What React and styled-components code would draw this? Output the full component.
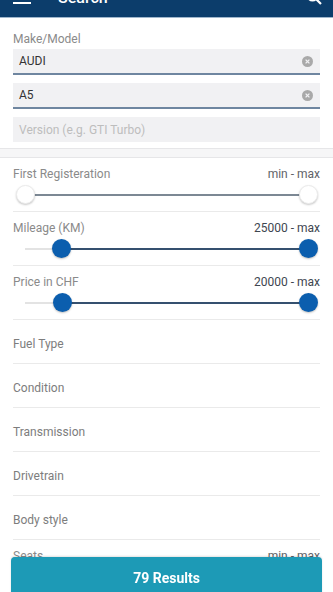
import React from "react";
import styled, {createGlobalStyle} from "styled-components";

const GlobalStyle = createGlobalStyle`
  html, body {
    margin: 0;
    padding: 0;
    background: #ffffff;
    overflow: hidden;
  }
  body {
    font-family: Roboto, "Liberation Sans", sans-serif;
    -webkit-font-smoothing: antialiased;
  }
`

const HeaderClip = styled.header`
  height: 17px;
  overflow: hidden;
  background: #0c3d6b;
  border-bottom: 1px solid #9fb6cc;
`

const Toolbar = styled.div`
  height: 40px;
  margin-top: -23px;
  display: flex;
  align-items: center;
  padding: 0 11px 0 13px;
  color: #ffffff;
`

const Title = styled.div`
  flex: 1;
  margin-left: 27px;
  font-size: 16px;
  font-weight: 500;
  line-height: 19px;
`

const Form = styled.div`
  padding: 13px 13px 6px 13px;
  display: flex;
  flex-direction: column;
`

const FieldLabel = styled.div`
  font-size: 12px;
  line-height: 16px;
  color: #8a8a8a;
  margin-bottom: 2px;
`

const InputBox = styled.div`
  height: ${p => (p.underline ? 24 : 25)}px;
  margin-top: ${p => (p.first ? 0 : 8)}px;
  background: #f1f1f3;
  border-bottom: ${p => (p.underline ? "2px solid #6f86a0" : "none")};
  display: flex;
  align-items: center;
  padding: 0 7px 0 6px;
  font-size: 12px;
  color: ${p => (p.placeholder ? "#bdbdbd" : "#333333")};
`

const InputText = styled.span`
  flex: 1;
`

const ClearIcon = () => (
    <svg width="11" height="11" viewBox="0 0 11 11">
        <circle cx="5.5" cy="5.5" r="5.5" fill="#a9a9a9"/>
        <path d="M3.6 3.6 L7.4 7.4 M7.4 3.6 L3.6 7.4" stroke="#f1f1f3" strokeWidth="1.3"/>
    </svg>
)

const SectionBand = styled.div`
  height: 8px;
  background: #f6f6f7;
  border-top: 1px solid #e6e6e8;
  border-bottom: 1px solid #e6e6e8;
`

const List = styled.div`
  padding: 0 13px;
`

const SliderBlock = styled.div`
  height: 54px;
  padding-top: 8px;
  box-sizing: border-box;
  border-bottom: 1px solid #eaeaea;
`

const RowHead = styled.div`
  display: flex;
  justify-content: space-between;
  font-size: 12px;
  line-height: 16px;
  color: #8a8a8a;
`

const RangeValue = styled.span`
  color: ${p => (p.set ? "#3e4650" : "#5f6368")};
`

const Track = styled.div`
  position: relative;
  height: 20px;
  margin: 3px 12px 0 12px;
`

const Rail = styled.div`
  position: absolute;
  left: 0;
  right: 0;
  top: 9px;
  height: 2px;
  background: #e3e3e3;
`

const ActiveRail = styled.div`
  position: absolute;
  top: 9px;
  height: 2px;
  background: ${p => (p.active ? "#35506f" : "#7c8894")};
`

const Thumb = styled.div`
  position: absolute;
  top: 0;
  width: 19px;
  height: 19px;
  margin-left: -9.5px;
  border-radius: 50%;
  box-sizing: border-box;
  background: ${p => (p.active ? "#0b5eae" : "#ffffff")};
  border: ${p => (p.active ? "none" : "1px solid #ececec")};
  box-shadow: ${p => (p.active ? "0 1px 2px rgba(0,0,0,0.25)" : "0 1px 2px rgba(0,0,0,0.22)")};
`

const ListItem = styled.div`
  height: 44px;
  box-sizing: border-box;
  padding-top: 16px;
  font-size: 12px;
  line-height: 16px;
  color: #7d7d7d;
  border-bottom: 1px solid #eaeaea;
`

const ResultsButton = styled.button`
  position: fixed;
  left: 11px;
  right: 11px;
  top: 557px;
  height: 42px;
  border: none;
  border-radius: 4px 4px 0 0;
  background: #1d9ab6;
  color: #ffffff;
  font-family: Roboto, "Liberation Sans", sans-serif;
  font-size: 14px;
  font-weight: 700;
  box-shadow: 0 -1px 2px rgba(0,0,0,0.12);
`

const RangeSlider = ({label, value, from, to, active}) => (
    <SliderBlock>
        <RowHead>
            <span>{label}</span>
            <RangeValue set={active}>{value}</RangeValue>
        </RowHead>
        <Track>
            <Rail/>
            <ActiveRail active={active} style={{left: `${from}%`, right: `${100 - to}%`}}/>
            <Thumb active={active} style={{left: `${from}%`}}/>
            <Thumb active={active} style={{left: `${to}%`}}/>
        </Track>
    </SliderBlock>
)

const sliders = [
    {label: "First Registeration", value: "min - max", from: 0, to: 100, active: false},
    {label: "Mileage (KM)", value: "25000 - max", from: 13, to: 100, active: true},
    {label: "Price in CHF", value: "20000 - max", from: 13.4, to: 100, active: true},
]

const filters = ["Fuel Type", "Condition", "Transmission", "Drivetrain", "Body style"]

export default function App() {
    return (
        <>
            <GlobalStyle/>
            <HeaderClip>
                <Toolbar>
                    <svg width="18" height="14" viewBox="0 0 18 14">
                        <path d="M0 1 H18 M0 7 H18 M0 13 H18" stroke="#ffffff" strokeWidth="2"/>
                    </svg>
                    <Title>Search</Title>
                    <svg width="16" height="16" viewBox="0 0 16 16">
                        <circle cx="6.5" cy="6.5" r="5" fill="none" stroke="#ffffff" strokeWidth="2"/>
                        <path d="M10 10 L15 15" stroke="#ffffff" strokeWidth="2.2"/>
                    </svg>
                </Toolbar>
            </HeaderClip>
            <Form>
                <FieldLabel>Make/Model</FieldLabel>
                <InputBox first underline>
                    <InputText>AUDI</InputText>
                    <ClearIcon/>
                </InputBox>
                <InputBox underline>
                    <InputText>A5</InputText>
                    <ClearIcon/>
                </InputBox>
                <InputBox placeholder>
                    <InputText>Version (e.g. GTI Turbo)</InputText>
                </InputBox>
            </Form>
            <SectionBand/>
            <List>
                {sliders.map(s => (
                    <RangeSlider key={s.label} {...s}/>
                ))}
                {filters.map(f => (
                    <ListItem key={f}>{f}</ListItem>
                ))}
                <RangeSlider label="Seats" value="min - max" from={0} to={100} active={false}/>
            </List>
            <ResultsButton>79 Results</ResultsButton>
        </>
    )
}
